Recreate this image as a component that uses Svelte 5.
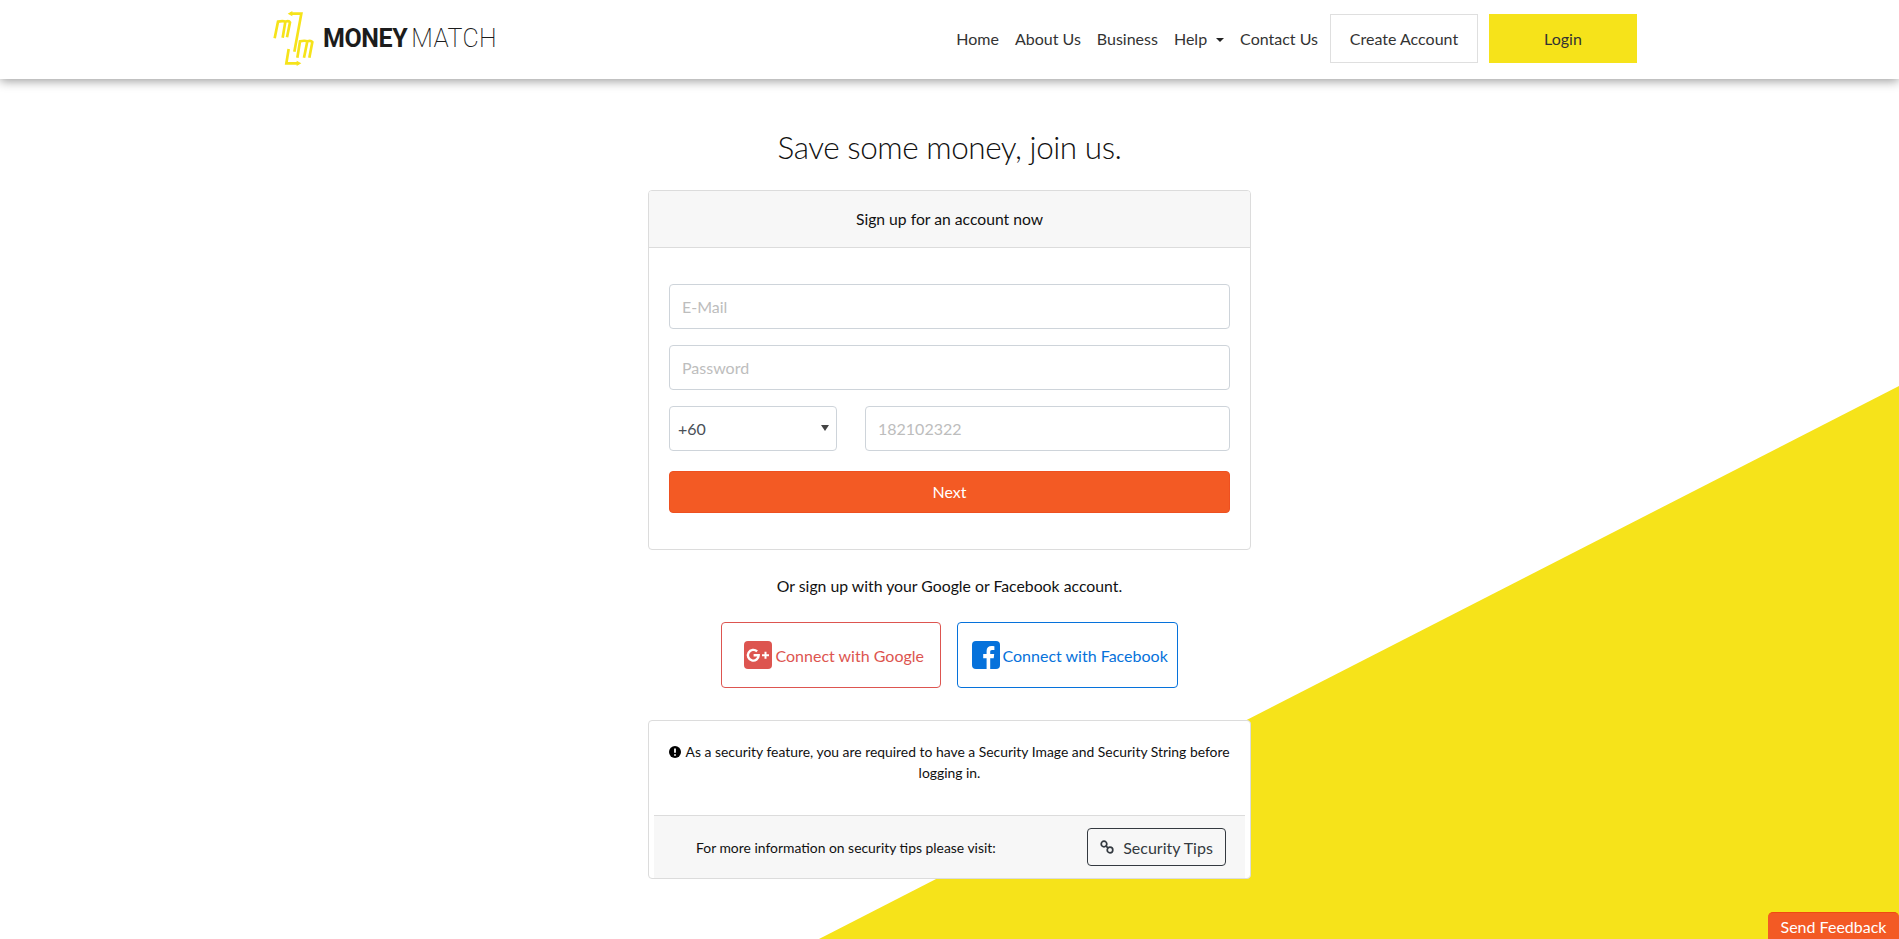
<script>
  const codes = ['+60', '+65', '+62'];
</script>

<div class="page">
  <div class="wedge" aria-hidden="true"></div>

  <header class="navbar">
    <a class="brand" href="#home">
      <svg class="mark" viewBox="0 0 156 180" aria-hidden="true">
        <g fill="none" stroke="#f6e31a" stroke-width="8">
          <path d="M20 88 30 38C38 36 48 36 52 38L44 86M52 38C58 36 64 36 66 40L57 85" />
          <path d="M66 14H100L79 128" />
          <path d="M62 120 55 163H92" />
          <path d="M88 146 96 97C104 95 114 95 118 97L108 146M118 97C124 95 130 95 133 99L124 146" />
        </g>
        <path d="M59 14 73 6V22ZM100 163 86 155V171Z" fill="#f6e31a" />
      </svg>
      <span class="word"><b>MONEY</b><span>MATCH</span></span>
    </a>
    <nav class="links">
      <a href="#home">Home</a>
      <a href="#about">About Us</a>
      <a href="#business">Business</a>
      <a href="#help" class="caret">Help</a>
      <a href="#contact">Contact Us</a>
      <a href="#create" class="btn-create">Create Account</a>
      <a href="#login" class="btn-login">Login</a>
    </nav>
  </header>

  <main class="main">
    <h1>Save some money, join us.</h1>

    <section class="card signup">
      <div class="card-head">Sign up for an account now</div>
      <form class="card-body">
        <input type="text" placeholder="E-Mail" />
        <input type="password" placeholder="Password" />
        <div class="phone">
          <div class="select-wrap">
            <select>
              {#each codes as c}<option>{c}</option>{/each}
            </select>
          </div>
          <input type="text" placeholder="182102322" />
        </div>
        <button type="button" class="next">Next</button>
      </form>
    </section>

    <p class="or">Or sign up with your Google or Facebook account.</p>

    <div class="social">
      <a href="#google" class="soc google">
        <svg viewBox="0 0 28 28" aria-hidden="true">
          <rect width="28" height="28" rx="4" fill="#dd5550" />
          <path d="M13.1 10.4A5.4 5.4 0 1 0 14.7 14.3H9.6" fill="none" stroke="#fff" stroke-width="2.4" />
          <path d="M18 14.2H25M21.5 10.7V17.7" fill="none" stroke="#fff" stroke-width="2" />
        </svg>
        <span>Connect with Google</span>
      </a>
      <a href="#facebook" class="soc facebook">
        <svg viewBox="0 0 28 28" aria-hidden="true">
          <rect width="28" height="28" rx="4" fill="#0672db" />
          <path d="M14.6 28V17.2H11.2V13H14.6V10C14.6 6.7 16.6 5 19.5 5C20.9 5 22 5.1 22.4 5.2V8.9H20.1C18.5 8.9 18.2 9.7 18.2 10.8V13H22.2L21.7 17.2H18.2V28Z" fill="#fff" />
        </svg>
        <span>Connect with Facebook</span>
      </a>
    </div>

    <section class="card notice">
      <p class="warn">
        <svg viewBox="0 0 12 12" aria-hidden="true">
          <circle cx="6" cy="6" r="6" fill="#000" />
          <path d="M6 2.4V6.8M6 8.2V9.8" stroke="#fff" stroke-width="1.8" />
        </svg>
        As a security feature, you are required to have a Security Image and Security String before logging in.
      </p>
      <div class="notice-foot">
        <span>For more information on security tips please visit:</span>
        <a href="#tips" class="tips">
          <svg viewBox="0 0 14 14" aria-hidden="true">
            <g fill="none" stroke="#343a40" stroke-width="1.7">
              <circle cx="4" cy="4" r="2.8" />
              <circle cx="10" cy="10" r="2.8" />
              <path d="M5.6 5.6 8.4 8.4" />
            </g>
          </svg>
          Security Tips
        </a>
      </div>
    </section>
  </main>

  <a href="#feedback" class="feedback">Send Feedback</a>
</div>

<style>
  :global(body) {
    margin: 0;
    background: #fff;
    font-family: Lato, "Liberation Sans", sans-serif;
    color: #212529;
  }
  .page {
    position: relative;
    height: 939px;
    overflow: hidden;
  }
  .wedge {
    position: absolute;
    inset: 0;
    background: #f6e31a;
    clip-path: polygon(100% 386px, 100% 100%, 819px 100%);
  }
  a {
    text-decoration: none;
    color: inherit;
  }

  .navbar {
    position: relative;
    height: 79px;
    box-sizing: border-box;
    padding: 0 262px 2px 273px;
    display: flex;
    align-items: center;
    justify-content: space-between;
    background: #fff;
    box-shadow: 0 2px 10px rgba(0, 0, 0, 0.4);
  }
  .brand {
    display: flex;
    align-items: center;
  }
  .mark {
    width: 52px;
    height: 60px;
    margin: 0 -1px 0 -5px;
  }
  .word {
    font-family: Roboto, sans-serif;
    font-size: 25px;
    color: #1c1c1c;
    line-height: 1;
    margin-left: 4px;
  }
  .word b {
    font-weight: 700;
    letter-spacing: -0.4px;
  }
  .word span {
    font-weight: 200;
    letter-spacing: 0.4px;
    margin-left: 4px;
  }
  .links {
    display: flex;
    align-items: center;
    font-size: 16px;
    color: #333;
  }
  .links > a {
    margin-right: 16px;
  }
  .links > a:nth-child(5) {
    margin-right: 12px;
  }
  .caret::after {
    content: "";
    display: inline-block;
    margin-left: 9px;
    vertical-align: 3px;
    border-top: 4px solid #222;
    border-left: 4px solid transparent;
    border-right: 4px solid transparent;
  }
  .links > .btn-create,
  .links > .btn-login {
    box-sizing: border-box;
    height: 49px;
    display: flex;
    align-items: center;
    justify-content: center;
  }
  .links > .btn-create {
    width: 148px;
    border: 1px solid #dfdfdf;
    margin-right: 11px;
  }
  .links > .btn-login {
    width: 148px;
    margin-right: 0;
    background: #f6e31a;
  }

  .main {
    position: relative;
    display: flex;
    flex-direction: column;
    align-items: center;
  }
  h1 {
    margin: 49px 0 24px;
    font-size: 31.5px;
    letter-spacing: -0.45px;
    line-height: 38px;
    font-weight: 300;
    color: #111;
  }
  .card {
    width: 603px;
    box-sizing: border-box;
    background: #fff;
    border: 1px solid #dcdcdc;
    border-radius: 4px;
  }
  .card-head {
    height: 57px;
    box-sizing: border-box;
    display: flex;
    align-items: center;
    justify-content: center;
    background: #f7f7f7;
    border-bottom: 1px solid #dcdcdc;
    border-radius: 3px 3px 0 0;
    font-size: 15.7px;
    color: #111;
  }
  .card-body {
    height: 301px;
    box-sizing: border-box;
    padding: 36px 20px 0;
    display: flex;
    flex-direction: column;
    gap: 16px;
  }
  input,
  select {
    height: 45px;
    box-sizing: border-box;
    border: 1px solid #ced4da;
    border-radius: 4px;
    background-color: #fff;
    font: 16px Lato, sans-serif;
    color: #495057;
    padding: 0 12px;
    width: 100%;
    margin: 0;
  }
  input::placeholder {
    color: #bdbdbd;
    opacity: 1;
  }
  .phone {
    display: flex;
    gap: 28px;
  }
  .select-wrap {
    position: relative;
    flex: 0 0 168px;
    height: 45px;
  }
  .select-wrap::after {
    content: "";
    position: absolute;
    left: 151.5px;
    top: 19px;
    border-top: 6px solid #444;
    border-left: 4px solid transparent;
    border-right: 4px solid transparent;
    pointer-events: none;
  }
  select {
    appearance: none;
    padding: 0 8px;
  }
  .next {
    height: 42px;
    margin-top: 4px;
    padding: 0 0 2px;
    border: 1px solid #ee5020;
    border-radius: 4px;
    background: #f35a24;
    color: #fff;
    font: 16px Lato, sans-serif;
  }
  .or {
    margin: 26px 0 0;
    height: 20px;
    line-height: 20px;
    font-size: 15.8px;
    color: #111;
  }
  .social {
    display: flex;
    gap: 16px;
    margin-top: 26px;
    margin-left: -1px;
  }
  .soc {
    height: 66px;
    box-sizing: border-box;
    display: flex;
    align-items: center;
    gap: 4px;
    border: 1px solid;
    border-radius: 4px;
    font-size: 16px;
  }
  .soc svg {
    width: 28px;
    height: 28px;
    flex: none;
  }
  .google {
    width: 220px;
    padding-left: 22px;
    color: #dd5550;
    border-color: #dd5550;
  }
  .facebook {
    width: 221px;
    padding-left: 14px;
    gap: 3px;
    color: #0672db;
    border-color: #0672db;
  }
  .notice {
    margin-top: 32px;
    height: 159px;
    padding: 0 5px;
    display: flex;
    flex-direction: column;
    justify-content: space-between;
  }
  .warn {
    margin: 20px 10px 0;
    font-size: 13.9px;
    line-height: 21px;
    text-align: center;
    color: #111;
  }
  .warn svg {
    width: 12px;
    height: 12px;
    vertical-align: -1px;
    margin-right: 1px;
  }
  .notice-foot {
    height: 63px;
    box-sizing: border-box;
    display: flex;
    align-items: center;
    justify-content: space-between;
    padding: 0 19px 0 42px;
    background: #f7f7f7;
    border-top: 1px solid #dcdcdc;
    font-size: 13.9px;
    color: #111;
  }
  .tips {
    width: 139px;
    height: 38px;
    box-sizing: border-box;
    display: flex;
    align-items: center;
    justify-content: center;
    gap: 9px;
    border: 1px solid #343a40;
    border-radius: 4px;
    font-size: 16px;
    color: #343a40;
  }
  .tips svg {
    width: 14px;
    height: 14px;
  }
  .feedback {
    position: fixed;
    right: 0;
    bottom: 0;
    width: 131px;
    height: 27px;
    box-sizing: border-box;
    display: flex;
    align-items: center;
    justify-content: center;
    background: #f35a24;
    border-top: 1px solid #f04a10;
    border-radius: 5px 5px 0 0;
    color: #fff;
    font-size: 16px;
  }
</style>
